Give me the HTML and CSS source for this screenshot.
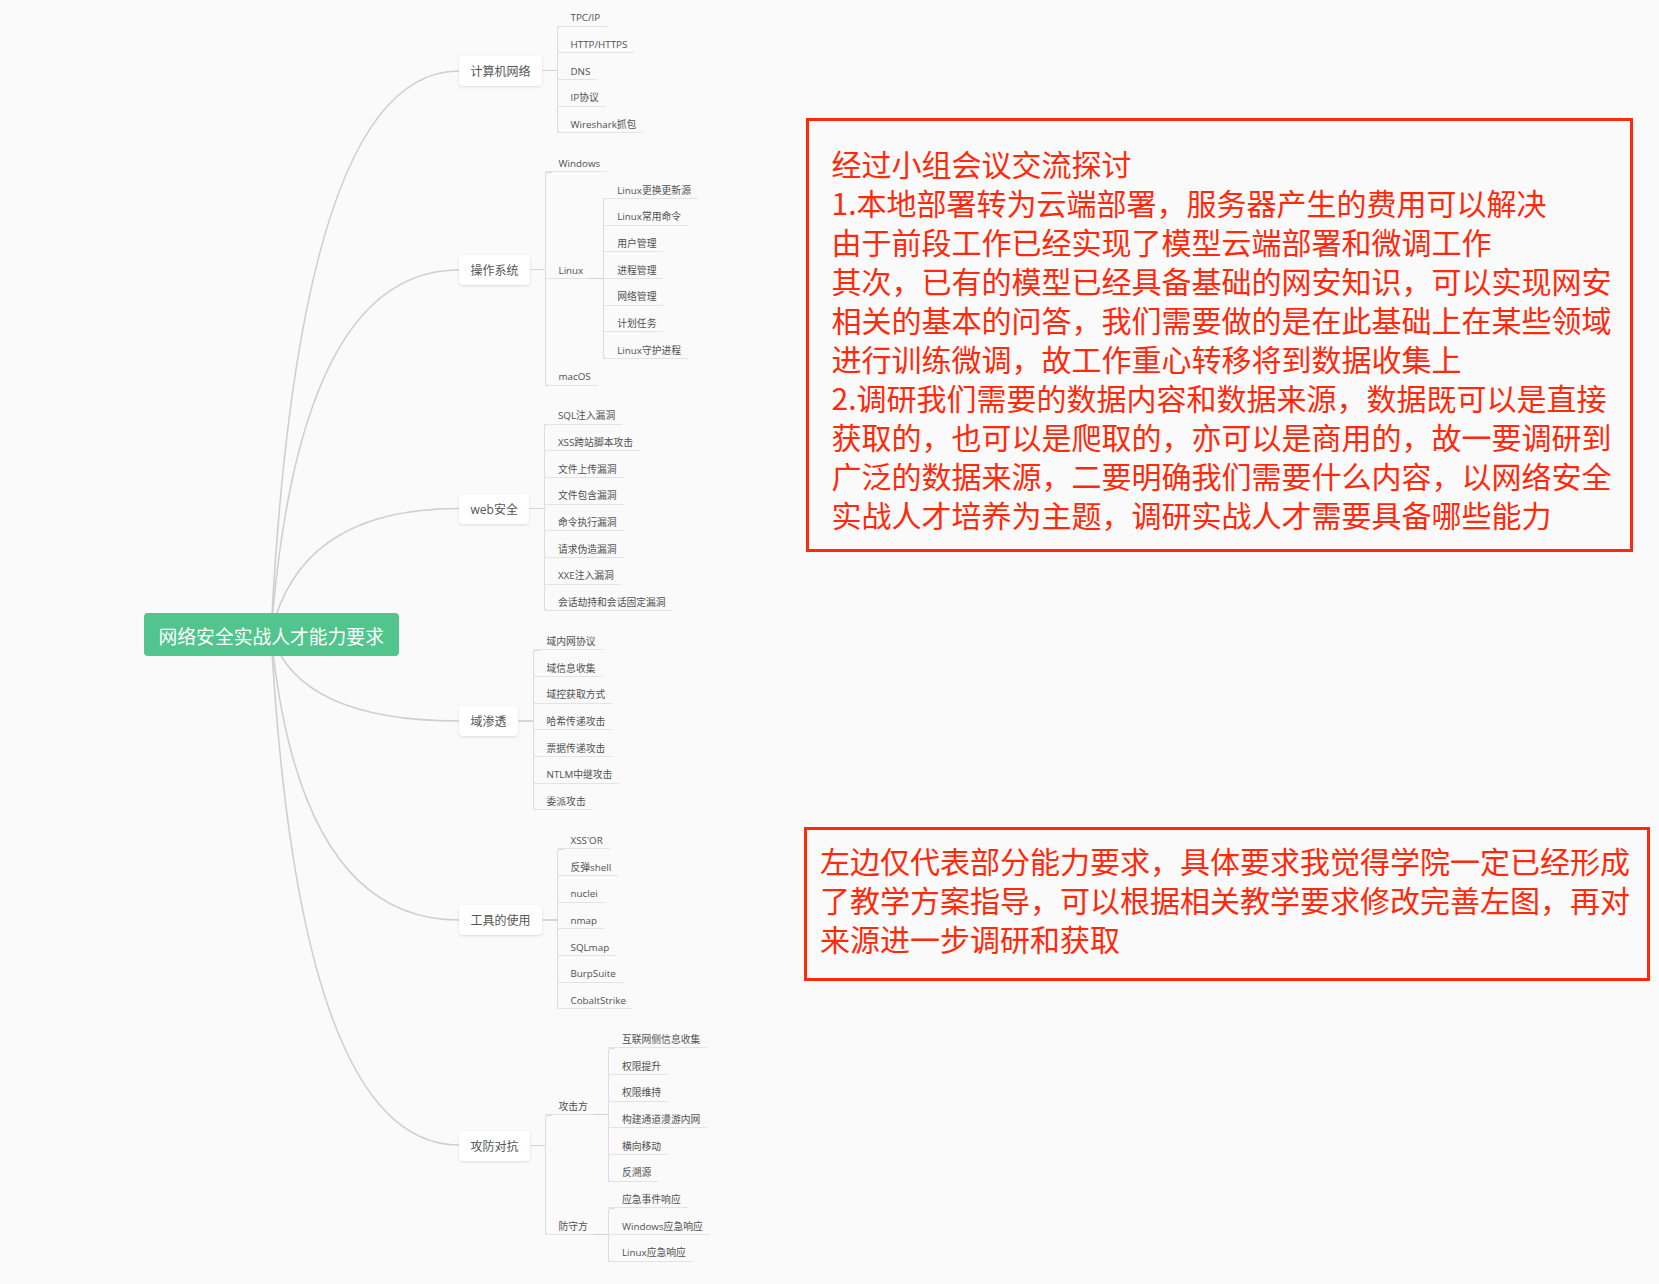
FILE: index.html
```html
<!DOCTYPE html>
<html lang="zh-CN">
<head>
<meta charset="utf-8">
<title>网络安全实战人才能力要求</title>
<link rel="stylesheet" href="styles.css">
</head>
<body>
<main class="page">
  <section class="map">
    <svg class="curves" viewBox="0 0 805 1284" aria-hidden="true">
      <path d="M271 634 Q299 71 459 71"/>
      <path d="M271 634 Q299 270 459 270"/>
      <path d="M271 634 Q299 508.5 459 508.5"/>
      <path d="M271 634 Q299 721 459 721"/>
      <path d="M271 634 Q299 920 459 920"/>
      <path d="M271 634 Q299 1145 459 1145"/>
    </svg>
    <div class="root">网络安全实战人才能力要求</div>
    <div class="topics">
      <div class="topic">
        <div class="node">计算机网络</div><div class="link"></div>
        <div class="kids">
          <div class="label">TPC/IP</div>
          <div class="label">HTTP/HTTPS</div>
          <div class="label">DNS</div>
          <div class="label">IP协议</div>
          <div class="label">Wireshark抓包</div>
        </div>
      </div>
      <div class="topic">
        <div class="node">操作系统</div><div class="link"></div>
        <div class="kids">
          <div class="label">Windows</div>
          <div class="item">
            <div class="label parent">Linux</div>
            <div class="kids">
              <div class="label">Linux更换更新源</div>
              <div class="label">Linux常用命令</div>
              <div class="label">用户管理</div>
              <div class="label">进程管理</div>
              <div class="label">网络管理</div>
              <div class="label">计划任务</div>
              <div class="label">Linux守护进程</div>
            </div>
          </div>
          <div class="label">macOS</div>
        </div>
      </div>
      <div class="topic">
        <div class="node">web安全</div><div class="link"></div>
        <div class="kids">
          <div class="label">SQL注入漏洞</div>
          <div class="label">XSS跨站脚本攻击</div>
          <div class="label">文件上传漏洞</div>
          <div class="label">文件包含漏洞</div>
          <div class="label">命令执行漏洞</div>
          <div class="label">请求伪造漏洞</div>
          <div class="label">XXE注入漏洞</div>
          <div class="label">会话劫持和会话固定漏洞</div>
        </div>
      </div>
      <div class="topic">
        <div class="node">域渗透</div><div class="link"></div>
        <div class="kids">
          <div class="label">域内网协议</div>
          <div class="label">域信息收集</div>
          <div class="label">域控获取方式</div>
          <div class="label">哈希传递攻击</div>
          <div class="label">票据传递攻击</div>
          <div class="label">NTLM中继攻击</div>
          <div class="label">委派攻击</div>
        </div>
      </div>
      <div class="topic">
        <div class="node">工具的使用</div><div class="link"></div>
        <div class="kids">
          <div class="label">XSS'OR</div>
          <div class="label">反弹shell</div>
          <div class="label">nuclei</div>
          <div class="label">nmap</div>
          <div class="label">SQLmap</div>
          <div class="label">BurpSuite</div>
          <div class="label">CobaltStrike</div>
        </div>
      </div>
      <div class="topic">
        <div class="node">攻防对抗</div><div class="link"></div>
        <div class="kids kids-sides">
          <div class="item">
            <div class="label parent">攻击方</div>
            <div class="kids">
              <div class="label">互联网侧信息收集</div>
              <div class="label">权限提升</div>
              <div class="label">权限维持</div>
              <div class="label">构建通道漫游内网</div>
              <div class="label">横向移动</div>
              <div class="label">反溯源</div>
            </div>
          </div>
          <div class="item">
            <div class="label parent">防守方</div>
            <div class="kids">
              <div class="label">应急事件响应</div>
              <div class="label">Windows应急响应</div>
              <div class="label">Linux应急响应</div>
            </div>
          </div>
        </div>
      </div>
    </div>
  </section>
  <aside class="notes">
    <p class="note note-main">经过小组会议交流探讨<br>1.本地部署转为云端部署，服务器产生的费用可以解决<br>由于前段工作已经实现了模型云端部署和微调工作<br>其次，已有的模型已经具备基础的网安知识，可以实现网安<br>相关的基本的问答，我们需要做的是在此基础上在某些领域<br>进行训练微调，故工作重心转移将到数据收集上<br>2.调研我们需要的数据内容和数据来源，数据既可以是直接<br>获取的，也可以是爬取的，亦可以是商用的，故一要调研到<br>广泛的数据来源，二要明确我们需要什么内容，以网络安全<br>实战人才培养为主题，调研实战人才需要具备哪些能力</p>
    <p class="note note-side">左边仅代表部分能力要求，具体要求我觉得学院一定已经形成<br>了教学方案指导，可以根据相关教学要求修改完善左图，再对<br>来源进一步调研和获取</p>
  </aside>
</main>
</body>
</html>
```

FILE: styles.css
```css
* { box-sizing: border-box; }
html, body { margin: 0; padding: 0; }
body {
  width: 1659px;
  height: 1284px;
  overflow: hidden;
  background: #fafafa;
  font-family: "Open Sans", "Noto Sans CJK SC", sans-serif;
}
.page { display: flex; width: 1659px; height: 1284px; }

/* mind map */
.map { position: relative; flex: 0 0 804px; height: 1284px; }
.curves { position: absolute; left: 0; top: 0; width: 805px; height: 1284px; }
.curves path { fill: none; stroke: #cfcfcf; stroke-width: 1.6; }
.root {
  position: absolute;
  left: 144px;
  top: 613px;
  width: 254.5px;
  height: 43px;
  display: flex;
  align-items: center;
  justify-content: center;
  padding-top: 3px;
  background: #52c48d;
  border-radius: 4px;
  color: #fff;
  font-size: 18.8px;
  white-space: nowrap;
}
.topics {
  position: relative;
  display: flex;
  flex-direction: column;
  gap: 12.3px;
  margin-left: 459px;
  margin-top: 0;
}
.topic { display: flex; align-items: center; }
.node {
  height: 30px;
  margin-top: 8px;
  padding: 0 11.5px;
  display: flex;
  align-items: center;
  background: #fff;
  border-radius: 4px;
  box-shadow: 0 1px 3px rgba(0, 0, 0, 0.12);
  color: #555;
  font-size: 12px;
  white-space: nowrap;
}
.link { width: 14.5px; height: 1.5px; margin-top: 8px; background: #d6d6d6; }
.kids { position: relative; display: flex; flex-direction: column; align-items: flex-start; }
.kids::before {
  content: "";
  position: absolute;
  left: 0;
  top: 26.1px;
  bottom: 0;
  width: 6px;
  border: 1px solid #dcdcdc;
  border-right: 0;
  border-radius: 3px 0 0 3px;
}
.kids-sides::before { top: 93px; bottom: 26.7px; }
.item { display: flex; align-items: center; }
.label {
  position: relative;
  height: 26.68px;
  padding: 0 7px 1.5px 14px;
  display: flex;
  align-items: flex-end;
  border-bottom: 1px solid #e3e3e3;
  color: #505050;
  font-size: 9.8px;
  line-height: 12px;
  white-space: nowrap;
}
.parent { padding-right: 20px; }
.parent::after {
  content: "";
  position: absolute;
  right: 0;
  bottom: -1px;
  width: 13.5px;
  height: 1px;
  background: #d0d0d0;
}

/* notes */
.notes { flex: 1; display: flex; flex-direction: column; align-items: flex-start; gap: 275px; padding-top: 118px; }
.note {
  margin: 0;
  border: 3px solid #ff2a0c;
  color: #ff2a0c;
  font-family: "Noto Sans CJK SC", sans-serif;
  font-size: 30px;
  line-height: 39px;
  white-space: nowrap;
}
.note-main { width: 827px; height: 434px; margin-left: 2px; padding: 22.5px 0 0 22.5px; }
.note-side { width: 846px; height: 154px; padding: 10.5px 0 0 13px; }
```
